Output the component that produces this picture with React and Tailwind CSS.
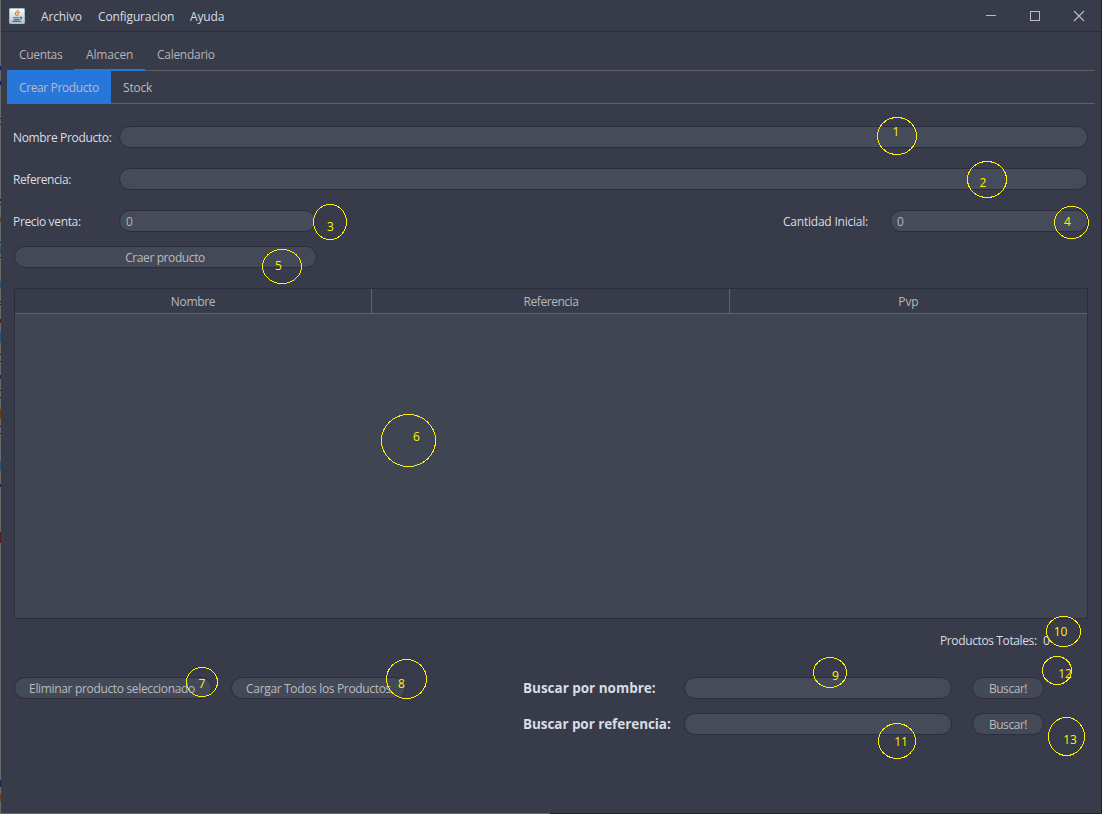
import React from "react";

const marks = [
  { n: 1, x: 877, y: 117, w: 39, h: 37, tx: 896, ty: 136 },
  { n: 2, x: 967, y: 161, w: 39, h: 36, tx: 983, ty: 187 },
  { n: 3, x: 313, y: 204, w: 33, h: 35, tx: 330.5, ty: 231 },
  { n: 4, x: 1054, y: 206, w: 34, h: 32, tx: 1067.5, ty: 226 },
  { n: 5, x: 262, y: 249, w: 39, h: 34, tx: 278.5, ty: 270 },
  { n: 6, x: 381, y: 414, w: 54, h: 52, tx: 416.5, ty: 441 },
  { n: 7, x: 186, y: 667, w: 31, h: 29, tx: 202, ty: 688 },
  { n: 8, x: 386, y: 659, w: 40, h: 39, tx: 401.5, ty: 688 },
  { n: 9, x: 813, y: 657, w: 33, h: 30, tx: 835.5, ty: 680 },
  { n: 10, x: 1046, y: 616, w: 34, h: 30, tx: 1060.5, ty: 636 },
  { n: 11, x: 878, y: 723, w: 37, h: 35, tx: 901, ty: 746 },
  { n: 12, x: 1042, y: 656, w: 29, h: 28, tx: 1065, ty: 678 },
  { n: 13, x: 1048, y: 717, w: 36, h: 38, tx: 1070, ty: 744 },
];

function Field({ className = "", children }) {
  return (
    <div className={`flex h-[22px] items-center rounded-full border border-[#2c2e3b] bg-[#464b59] pl-1.5 pt-px text-[#b4b6ba] ${className}`}>
      {children}
    </div>
  );
}

function Button({ className = "", children }) {
  return (
    <button className={`flex h-[22px] items-center justify-center rounded-full border border-[#2c2e3b] bg-[#444957] pt-0.5 text-[#b9bbbe] ${className}`}>
      {children}
    </button>
  );
}

function JavaIcon() {
  return (
    <svg width="16" height="16" viewBox="0 0 16 16">
      <defs>
        <linearGradient id="tile" x1="0" y1="0" x2="0" y2="1">
          <stop offset="0" stopColor="#fbfcfc" />
          <stop offset="1" stopColor="#b3c5cd" />
        </linearGradient>
      </defs>
      <rect x="0.5" y="0.5" width="15" height="15" rx="0.8" fill="url(#tile)" stroke="#a9bbc4" />
      <path d="M8.9 1.6c1 1.6-2.7 2.5-2.6 4.1 .1 1 1.2 1.5 1.2 2.5M10.9 4.2c-1.8.6-2.7 1.3-2.1 2.2.5.7.3 1.2-.2 1.8" fill="none" stroke="#e58531" strokeWidth="1.3" />
      <path d="M4 9.7h6.5M11 9.2c2.6-.3 2.2 1.6-.3 2.1M4.8 11.6h5.4M3.2 13.4h9" fill="none" stroke="#456f8b" strokeWidth="1.1" />
    </svg>
  );
}

export default function App() {
  return (
    <div className="relative flex h-[814px] w-[1102px] flex-col overflow-hidden bg-[#383b49] font-['Open_Sans',sans-serif] text-[12px] leading-4 tracking-[-0.34px] text-[#d8dde4]">
      <header className="flex h-8 shrink-0 items-center border-b border-[#2c2e38] pl-[9px]">
        <JavaIcon />
        <nav className="flex flex-1 items-center whitespace-nowrap pt-0.5 tracking-[-0.14px]">
          <span className="ml-4 w-[57px]">Archivo</span>
          <span className="w-[92px]">Configuracion</span>
          <span>Ayuda</span>
        </nav>
        <svg width="120" height="31" viewBox="0 0 120 31" fill="none" stroke="#bcbdbf" shapeRendering="crispEdges">
          <path d="M4 15.5h10" />
          <rect x="48.5" y="11.5" width="9" height="9" />
          <path d="M92 11l10 10M102 11l-10 10" shapeRendering="auto" strokeWidth="1.1" />
        </svg>
      </header>

      <main className="flex flex-1 flex-col pl-[7px] pr-[7px]">
        <div className="flex h-[39px] border-b border-[#616161] text-[#b2b5ba]">
          <span className="w-[67px] pl-3 pt-[15px]">Cuentas</span>
          <span className="-mb-px h-[39px] w-[71px] border-b-2 border-[#2777db] pl-3 pt-[15px] tracking-[-0.14px]">Almacen</span>
          <span className="pl-3 pt-[15px] tracking-[-0.28px]">Calendario</span>
        </div>
        <div className="flex h-[33px] border-b border-[#616161] text-[#b9bbbf]">
          <span className="-mt-px -mb-px w-[104px] whitespace-nowrap bg-[#2777db] pl-3 pt-[10px] tracking-[-0.38px]">Crear Producto</span>
          <span className="pl-3 pt-[9px] tracking-[-0.2px]">Stock</span>
        </div>

        <section className="flex flex-col gap-5 pl-1.5 pr-[7px] pt-[22px]">
          <div className="flex items-center">
            <label className="w-[106px] whitespace-nowrap pt-0.5">Nombre Producto:</label>
            <Field className="flex-1" />
          </div>
          <div className="flex items-center">
            <label className="w-[106px] pt-0.5 tracking-[-0.42px]">Referencia:</label>
            <Field className="flex-1" />
          </div>
          <div className="flex items-center">
            <label className="w-[106px] pt-0.5">Precio venta:</label>
            <Field className="w-[197px]">0</Field>
            <label className="ml-auto w-[107px] whitespace-nowrap pt-0.5 tracking-[-0.22px]">Cantidad Inicial:</label>
            <Field className="w-[198px]">0</Field>
          </div>
        </section>

        <section className="flex flex-col pl-[7px] pr-[7px] pt-[14px]">
          <Button className="w-[303px] pr-px tracking-[-0.4px]">Craer producto</Button>
          <div className="mt-5 flex h-[331px] flex-col border border-[#2c2e3b] bg-[#404651]">
            <div className="grid h-[25px] grid-cols-[357px_358px_1fr] border-b border-[#5f6267] bg-[#383b49] text-center leading-[25px] text-[#b6b8bc]">
              <span className="border-r border-[#5f6267]">Nombre</span>
              <span className="border-r border-[#5f6267] pl-px tracking-[-0.46px]">Referencia</span>
              <span className="tracking-[-0.1px]">Pvp</span>
            </div>
          </div>
          <div className="mt-3.5 flex justify-end pr-[38px]">
            <span className="w-[103px] whitespace-nowrap tracking-[-0.38px]">Productos Totales:</span>
            <span className="w-[7px]">0</span>
          </div>
          <div className="mt-7 flex items-start">
            <Button className="w-[198px] whitespace-nowrap pr-0.5">Eliminar producto seleccionado</Button>
            <Button className="ml-[19px] w-[175px] whitespace-nowrap">Cargar Todos los Productos</Button>
            <div className="ml-auto mr-[44px] grid grid-cols-[161px_268px_92px] gap-y-3.5">
              <label className="whitespace-nowrap pt-[3px] text-[13.5px] font-bold tracking-[-0.02px]">Buscar por nombre:</label>
              <Field />
              <Button className="ml-5 w-[72px] tracking-[-0.45px]">Buscar!</Button>
              <label className="whitespace-nowrap pt-[3px] text-[13.5px] font-bold tracking-[-0.07px]">Buscar por referencia:</label>
              <Field />
              <Button className="ml-5 w-[72px] tracking-[-0.45px]">Buscar!</Button>
            </div>
          </div>
        </section>
      </main>

      <div className="absolute left-0 top-0 h-[814px] w-px bg-[#686969]" />
      <div className="absolute right-0 top-0 h-[814px] w-px bg-[#24262e]" />
      <div className="absolute bottom-0 left-0 h-px w-[550px] bg-[#68696d]" />
      <div className="absolute bottom-0 right-0 h-px w-[552px] bg-[#24222a]" />

      <svg className="pointer-events-none absolute left-0 top-0" width="1102" height="814">
        <g fill="#15157a">
          <rect y="66" width="1" height="4" />
          <rect y="81" width="1" height="4" />
          <rect y="375" width="1" height="4" fill="#421c42" />
          <rect y="484" width="1" height="3" fill="#251c50" />
          <rect y="780" width="1" height="7" fill="#22204c" />
        </g>
        <g fill="#674214">
          <rect y="217" width="1" height="5" />
          <rect y="409" width="1" height="10" />
          <rect y="794" width="1" height="7" />
        </g>
        <g fill="#2d5570">
          <rect y="246" width="1" height="8" />
          <rect y="281" width="1" height="7" />
          <rect y="332" width="1" height="11" />
          <rect y="461" width="1" height="10" />
        </g>
        <g fill="#511d1d">
          <rect y="319" width="1" height="4" />
          <rect y="532" width="1" height="11" />
        </g>
        <path d="M.5 118v1M.5 124v1M.5 199v2M.5 204v1M.5 242v1M.5 257v1M.5 301v1M.5 304v1M.5 354v1M.5 361v1M.5 390v1M.5 397v1M.5 426v1M.5 433v1" stroke="#202020" />
      </svg>

      <svg className="pointer-events-none absolute left-0 top-0 tracking-normal" width="1102" height="814">
        {marks.map((m) => (
          <g key={m.n}>
            <ellipse cx={m.x + m.w / 2 + 0.5} cy={m.y + m.h / 2 + 0.5} rx={m.w / 2} ry={m.h / 2} fill="none" stroke="#fff200" shapeRendering="crispEdges" />
            <text x={m.tx} y={m.ty} textAnchor="middle" fill="#fff200">{m.n}</text>
          </g>
        ))}
      </svg>
    </div>
  );
}
